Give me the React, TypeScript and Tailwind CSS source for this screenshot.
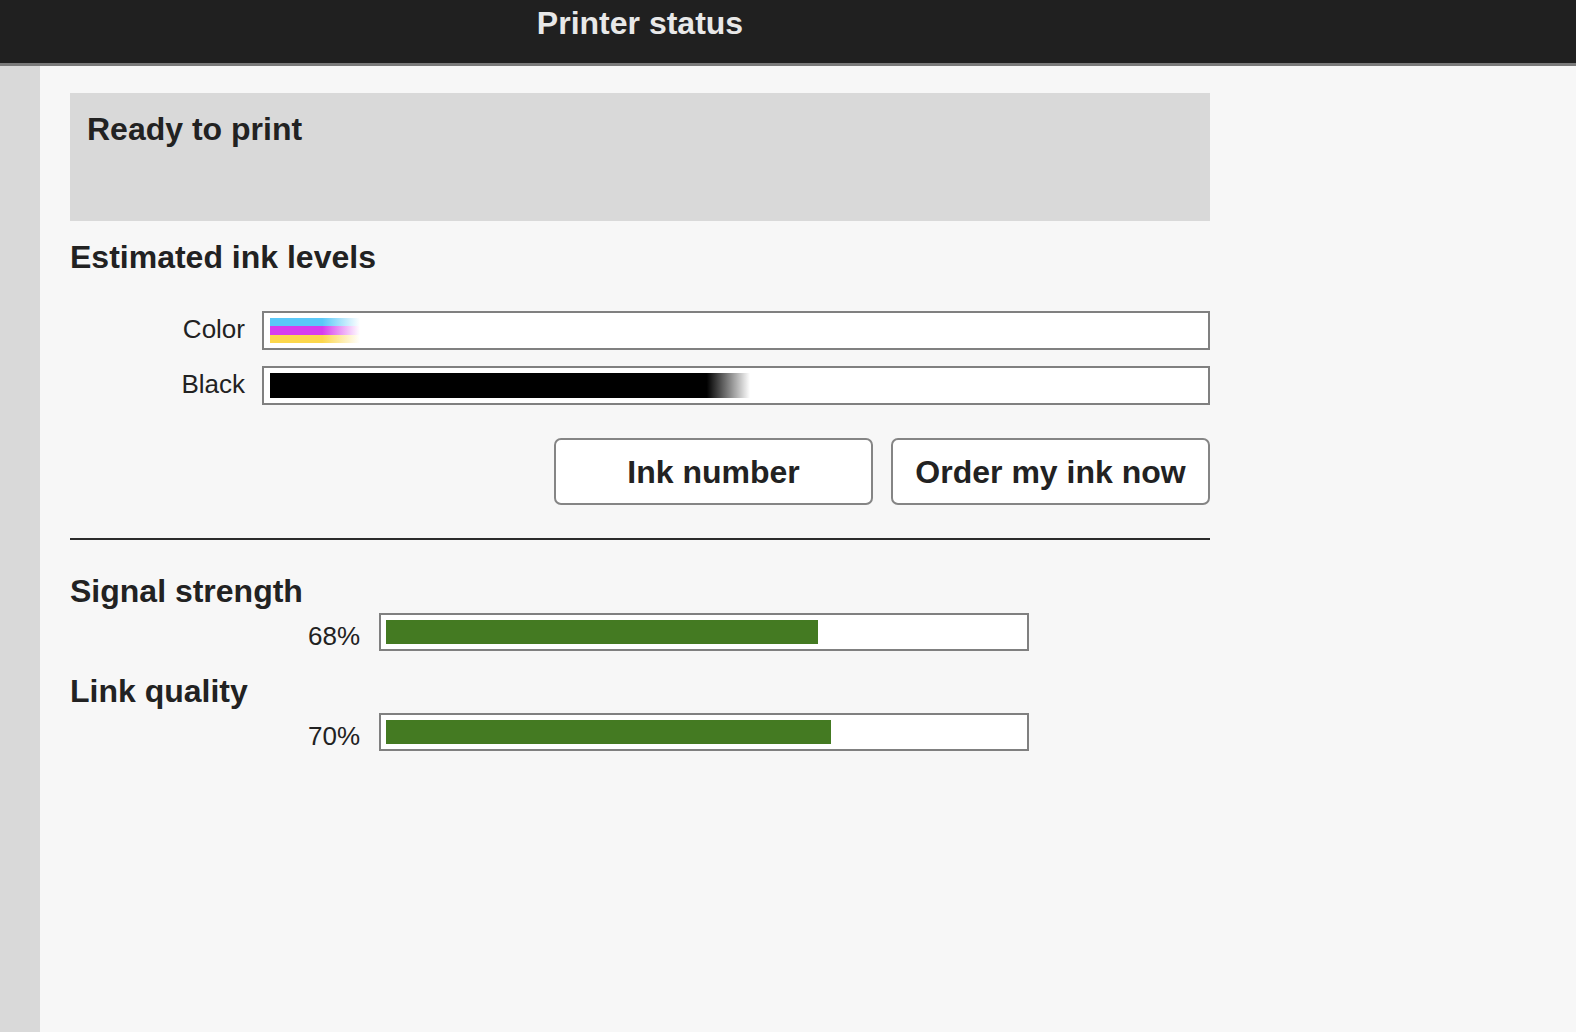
const inkRows = [
	{ label: "Color", kind: "color" },
	{ label: "Black", kind: "black" },
] as const;

const linkStats = [
	{ label: "Signal strength", value: 68 },
	{ label: "Link quality", value: 70 },
];

function InkFill({ kind }: { kind: "color" | "black" }) {
	if (kind === "black") {
		return (
			<div className="h-full w-[480px] bg-[linear-gradient(to_right,#000_91%,rgba(0,0,0,0)_100%)]" />
		);
	}
	return (
		<div className="flex h-full w-[90px] flex-col">
			<div className="h-[8px] bg-[linear-gradient(to_right,#5ac8f8_58%,rgba(90,200,248,0)_100%)]" />
			<div className="h-[9px] bg-[linear-gradient(to_right,#d73ded_58%,rgba(215,61,237,0)_100%)]" />
			<div className="h-[8px] bg-[linear-gradient(to_right,#fcd74c_58%,rgba(252,215,76,0)_100%)]" />
		</div>
	);
}

export default function App() {
	return (
		<div className="min-h-screen w-full bg-[#f7f7f7] font-['Liberation_Sans',Arial,sans-serif] text-[#222]">
			<header className="h-[66px] border-b-[3px] border-[#7a7a7a] bg-[#202020]">
				<div className="w-[1280px] pt-[7px] text-center text-[32px] leading-[32px] font-bold text-[#e8e8e8]">
					Printer status
				</div>
			</header>

			<div className="flex h-[966px]">
				<aside className="w-[40px] shrink-0 bg-[#d9d9d9]" />

				<main className="ml-[30px] w-[1140px] pt-[27px]">
					<div className="h-[128px] bg-[#d9d9d9] pt-[20px] pl-[17px]">
						<p className="text-[32px] leading-[32px] font-bold">Ready to print</p>
					</div>

					<h2 className="mt-[20px] text-[32px] leading-[32px] font-bold">
						Estimated ink levels
					</h2>

					<div className="mt-[38px] flex flex-col gap-[16px]">
						{inkRows.map((row) => (
							<div key={row.label} className="flex items-start">
								<span className="h-[39px] w-[175px] text-right text-[26px] leading-[36px]">
									{row.label}
								</span>
								<div className="ml-[17px] h-[39px] w-[948px] border-2 border-[#808080] bg-white px-[6px] py-[5px]">
									<InkFill kind={row.kind} />
								</div>
							</div>
						))}
					</div>

					<div className="mt-[33px] flex justify-end gap-[18px]">
						<button className="h-[67px] w-[319px] rounded-[7px] border-2 border-[#858585] bg-white text-[32px] leading-[32px] font-bold text-[#222]">
							Ink number
						</button>
						<button className="h-[67px] w-[319px] rounded-[7px] border-2 border-[#858585] bg-white text-[32px] leading-[32px] font-bold text-[#222]">
							Order my ink now
						</button>
					</div>

					<div className="mt-[33px] h-[2px] bg-[#2b2b2b]" />

					<div className="mt-[35px]">
						{linkStats.map((stat, i) => (
							<section key={stat.label} className={i > 0 ? "mt-[20px]" : ""}>
								<h2 className="text-[32px] leading-[32px] font-bold">{stat.label}</h2>
								<div className="mt-[6px] flex items-start">
									<span className="w-[290px] pt-[4px] text-right text-[26px] leading-[38px]">
										{stat.value}%
									</span>
									<div className="ml-[19px] h-[38px] w-[650px] border-2 border-[#808080] bg-white p-[5px]">
										<div
											className="h-full bg-[#447a22]"
											style={{ width: `${stat.value}%` }}
										/>
									</div>
								</div>
							</section>
						))}
					</div>
				</main>
			</div>
		</div>
	);
}
